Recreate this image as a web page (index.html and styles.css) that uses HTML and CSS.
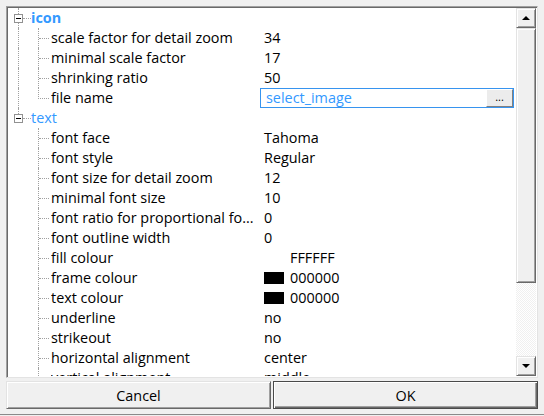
FILE: index.html
```html
<!DOCTYPE html>
<html>
<head>
<meta charset="utf-8">
<link rel="stylesheet" href="styles.css">
</head>
<body>
<div class="dialog">
  <div class="tree">
    <div class="rows">
      <div class="row">
        <div class="rg"><span class="seg-top"></span><span class="box"><i></i></span><span class="seg-bot"></span></div>
        <div class="hline"></div>
        <div class="rlabel bold">icon</div>
      </div>
      <div class="row">
        <div class="rootline"></div><div class="conn"><div class="tick"></div></div>
        <div class="label">scale factor for detail zoom</div><div class="value">34</div>
      </div>
      <div class="row">
        <div class="rootline"></div><div class="conn"><div class="tick"></div></div>
        <div class="label">minimal scale factor</div><div class="value">17</div>
      </div>
      <div class="row">
        <div class="rootline"></div><div class="conn"><div class="tick"></div></div>
        <div class="label">shrinking ratio</div><div class="value">50</div>
      </div>
      <div class="row">
        <div class="rootline"></div><div class="conn last"><div class="tick"></div></div>
        <div class="label">file name</div>
        <div class="value">
          <div class="edit"><span class="edit-text">select_image</span><span class="ebtn">...</span></div>
        </div>
      </div>
      <div class="row">
        <div class="rg"><span class="seg-top"></span><span class="box"><i></i></span><span class="seg-none"></span></div>
        <div class="hline"></div>
        <div class="rlabel">text</div>
      </div>
      <div class="row">
        <div class="rootline none"></div><div class="conn"><div class="tick"></div></div>
        <div class="label">font face</div><div class="value">Tahoma</div>
      </div>
      <div class="row">
        <div class="rootline none"></div><div class="conn"><div class="tick"></div></div>
        <div class="label">font style</div><div class="value">Regular</div>
      </div>
      <div class="row">
        <div class="rootline none"></div><div class="conn"><div class="tick"></div></div>
        <div class="label">font size for detail zoom</div><div class="value">12</div>
      </div>
      <div class="row">
        <div class="rootline none"></div><div class="conn"><div class="tick"></div></div>
        <div class="label">minimal font size</div><div class="value">10</div>
      </div>
      <div class="row">
        <div class="rootline none"></div><div class="conn"><div class="tick"></div></div>
        <div class="label">font ratio for proportional fo...</div><div class="value">0</div>
      </div>
      <div class="row">
        <div class="rootline none"></div><div class="conn"><div class="tick"></div></div>
        <div class="label">font outline width</div><div class="value">0</div>
      </div>
      <div class="row">
        <div class="rootline none"></div><div class="conn"><div class="tick"></div></div>
        <div class="label">fill colour</div><div class="value"><span class="sw white"></span>FFFFFF</div>
      </div>
      <div class="row">
        <div class="rootline none"></div><div class="conn"><div class="tick"></div></div>
        <div class="label">frame colour</div><div class="value"><span class="sw"></span>000000</div>
      </div>
      <div class="row">
        <div class="rootline none"></div><div class="conn"><div class="tick"></div></div>
        <div class="label">text colour</div><div class="value"><span class="sw"></span>000000</div>
      </div>
      <div class="row">
        <div class="rootline none"></div><div class="conn"><div class="tick"></div></div>
        <div class="label">underline</div><div class="value">no</div>
      </div>
      <div class="row">
        <div class="rootline none"></div><div class="conn"><div class="tick"></div></div>
        <div class="label">strikeout</div><div class="value">no</div>
      </div>
      <div class="row">
        <div class="rootline none"></div><div class="conn"><div class="tick"></div></div>
        <div class="label">horizontal alignment</div><div class="value">center</div>
      </div>
      <div class="row">
        <div class="rootline none"></div><div class="conn"><div class="tick"></div></div>
        <div class="label">vertical alignment</div><div class="value">middle</div>
      </div>
    </div>
    <div class="vscroll">
      <div class="sbtn"><span class="arrow up"></span></div>
      <div class="thumb"></div>
      <div class="track"></div>
      <div class="sbtn"><span class="arrow down"></span></div>
    </div>
  </div>
  <div class="buttons">
    <button class="btn">Cancel</button>
    <button class="btn default">OK</button>
  </div>
</div>
</body>
</html>
```

FILE: styles.css
```css
* { box-sizing: border-box; }
html, body { margin: 0; padding: 0; }
body {
  width: 544px;
  height: 416px;
  background: #f0f0f0;
  font-family: "Open Sans", "Noto Sans", sans-serif;
  font-size: 14.4px;
  color: #000;
  overflow: hidden;
}
.dialog {
  width: 544px;
  height: 415px;
  padding: 6px 6px 0 6px;
  display: flex;
  flex-direction: column;
  border-bottom: 1px solid #8a8a8a;
}
.tree {
  height: 372px;
  display: flex;
  background: #fff;
  border: 1px solid;
  border-color: #a0a0a0 #e3e3e3 #e3e3e3 #a0a0a0;
  box-shadow: inset 1px 1px #696969;
  padding: 1px 1px 1px 1px;
}
.rows {
  flex: 1;
  overflow: hidden;
}
.row {
  height: 20px;
  display: flex;
  align-items: stretch;
  line-height: 20px;
  white-space: nowrap;
}
/* root node gutter */
.rg {
  width: 9px;
  margin-left: 6px;
  display: flex;
  flex-direction: column;
  flex: none;
}
.seg-top {
  height: 6px;
  margin-left: 4px;
  border-left: 1px dotted #a0a0a0;
}
.box {
  height: 9px;
  border: 1px solid #919191;
  background: #fff;
  display: flex;
  align-items: center;
  justify-content: center;
}
.box i {
  width: 5px;
  height: 1px;
  background: #000;
}
.seg-bot {
  flex: 1;
  margin-left: 4px;
  border-left: 1px dotted #a0a0a0;
}
.seg-none { flex: 1; }
.hline {
  width: 8px;
  height: 11px;
  border-bottom: 1px dotted #a0a0a0;
  flex: none;
}
.rlabel {
  margin-left: 0;
  color: #3399ff;
  font-size: 14.4px;
}
.rlabel.bold { font-weight: 700; }
/* child gutter */
.rootline {
  width: 20px;
  margin-left: 10px;
  border-left: 1px dotted #a0a0a0;
  flex: none;
}
.rootline.none { border-left-color: transparent; }
.conn {
  width: 11px;
  border-left: 1px dotted #a0a0a0;
  flex: none;
}
.conn .tick {
  height: 11px;
  border-bottom: 1px dotted #a0a0a0;
}
.conn.last { border-left-color: transparent; }
.conn.last .tick {
  margin-left: -1px;
  border-left: 1px dotted #a0a0a0;
}
.label {
  width: 213px;
  margin-left: 2px;
  overflow: hidden;
  flex: none;
}
.value {
  flex: 1;
  display: flex;
  align-items: center;
}
.sw {
  width: 20px;
  height: 12px;
  background: #000;
  margin-right: 6px;
  flex: none;
}
.sw.white { background: #fff; }
.edit {
  margin-left: -4px;
  width: 254px;
  height: 20px;
  border: 1px solid #3794ef;
  display: flex;
  align-items: stretch;
}
.edit-text {
  flex: 1;
  padding-left: 5px;
  color: #3399ff;
  line-height: 18px;
}
.ebtn {
  width: 27px;
  background: #ececec;
  border: 1px solid;
  border-color: #fff #808080 #808080 #fff;
  font-size: 11px;
  line-height: 14px;
  text-align: center;
  color: #000;
}
/* scrollbar */
.vscroll {
  width: 20px;
  display: flex;
  flex-direction: column;
  flex: none;
}
.sbtn, .thumb {
  background: #f0f0f0;
  border: 1px solid;
  border-color: #e3e3e3 #696969 #696969 #e3e3e3;
  box-shadow: inset 1px 1px #fff, inset -1px -1px #a0a0a0;
}
.sbtn {
  height: 20px;
  display: flex;
  align-items: center;
  justify-content: center;
}
.thumb { height: 255px; }
.track {
  flex: 1;
  background-color: #fafafa;
  background-image: repeating-conic-gradient(#f0f0f0 0 25%, #ffffff 0 50%);
  background-size: 2px 2px;
}
.arrow {
  width: 0;
  height: 0;
  border-left: 4px solid transparent;
  border-right: 4px solid transparent;
}
.arrow.up { border-bottom: 4px solid #000; }
.arrow.down { border-top: 4px solid #000; }
/* dialog buttons */
.buttons {
  margin-top: 3px;
  height: 28px;
  display: flex;
  gap: 2px;
}
.btn {
  flex: 1;
  margin: 0;
  padding: 0;
  font-family: "Open Sans", "Noto Sans", sans-serif;
  font-size: 14.4px;
  color: #000;
  background: #f0f0f0;
  border: 1px solid;
  border-color: #e3e3e3 #696969 #696969 #e3e3e3;
  box-shadow: inset 1px 1px #fff, inset -1px -1px #a0a0a0;
}
.btn.default {
  border-color: #4a4a4a;
  box-shadow: inset 1px 1px #fff, inset -1px -1px #696969, inset -2px -2px #a0a0a0;
}
```
